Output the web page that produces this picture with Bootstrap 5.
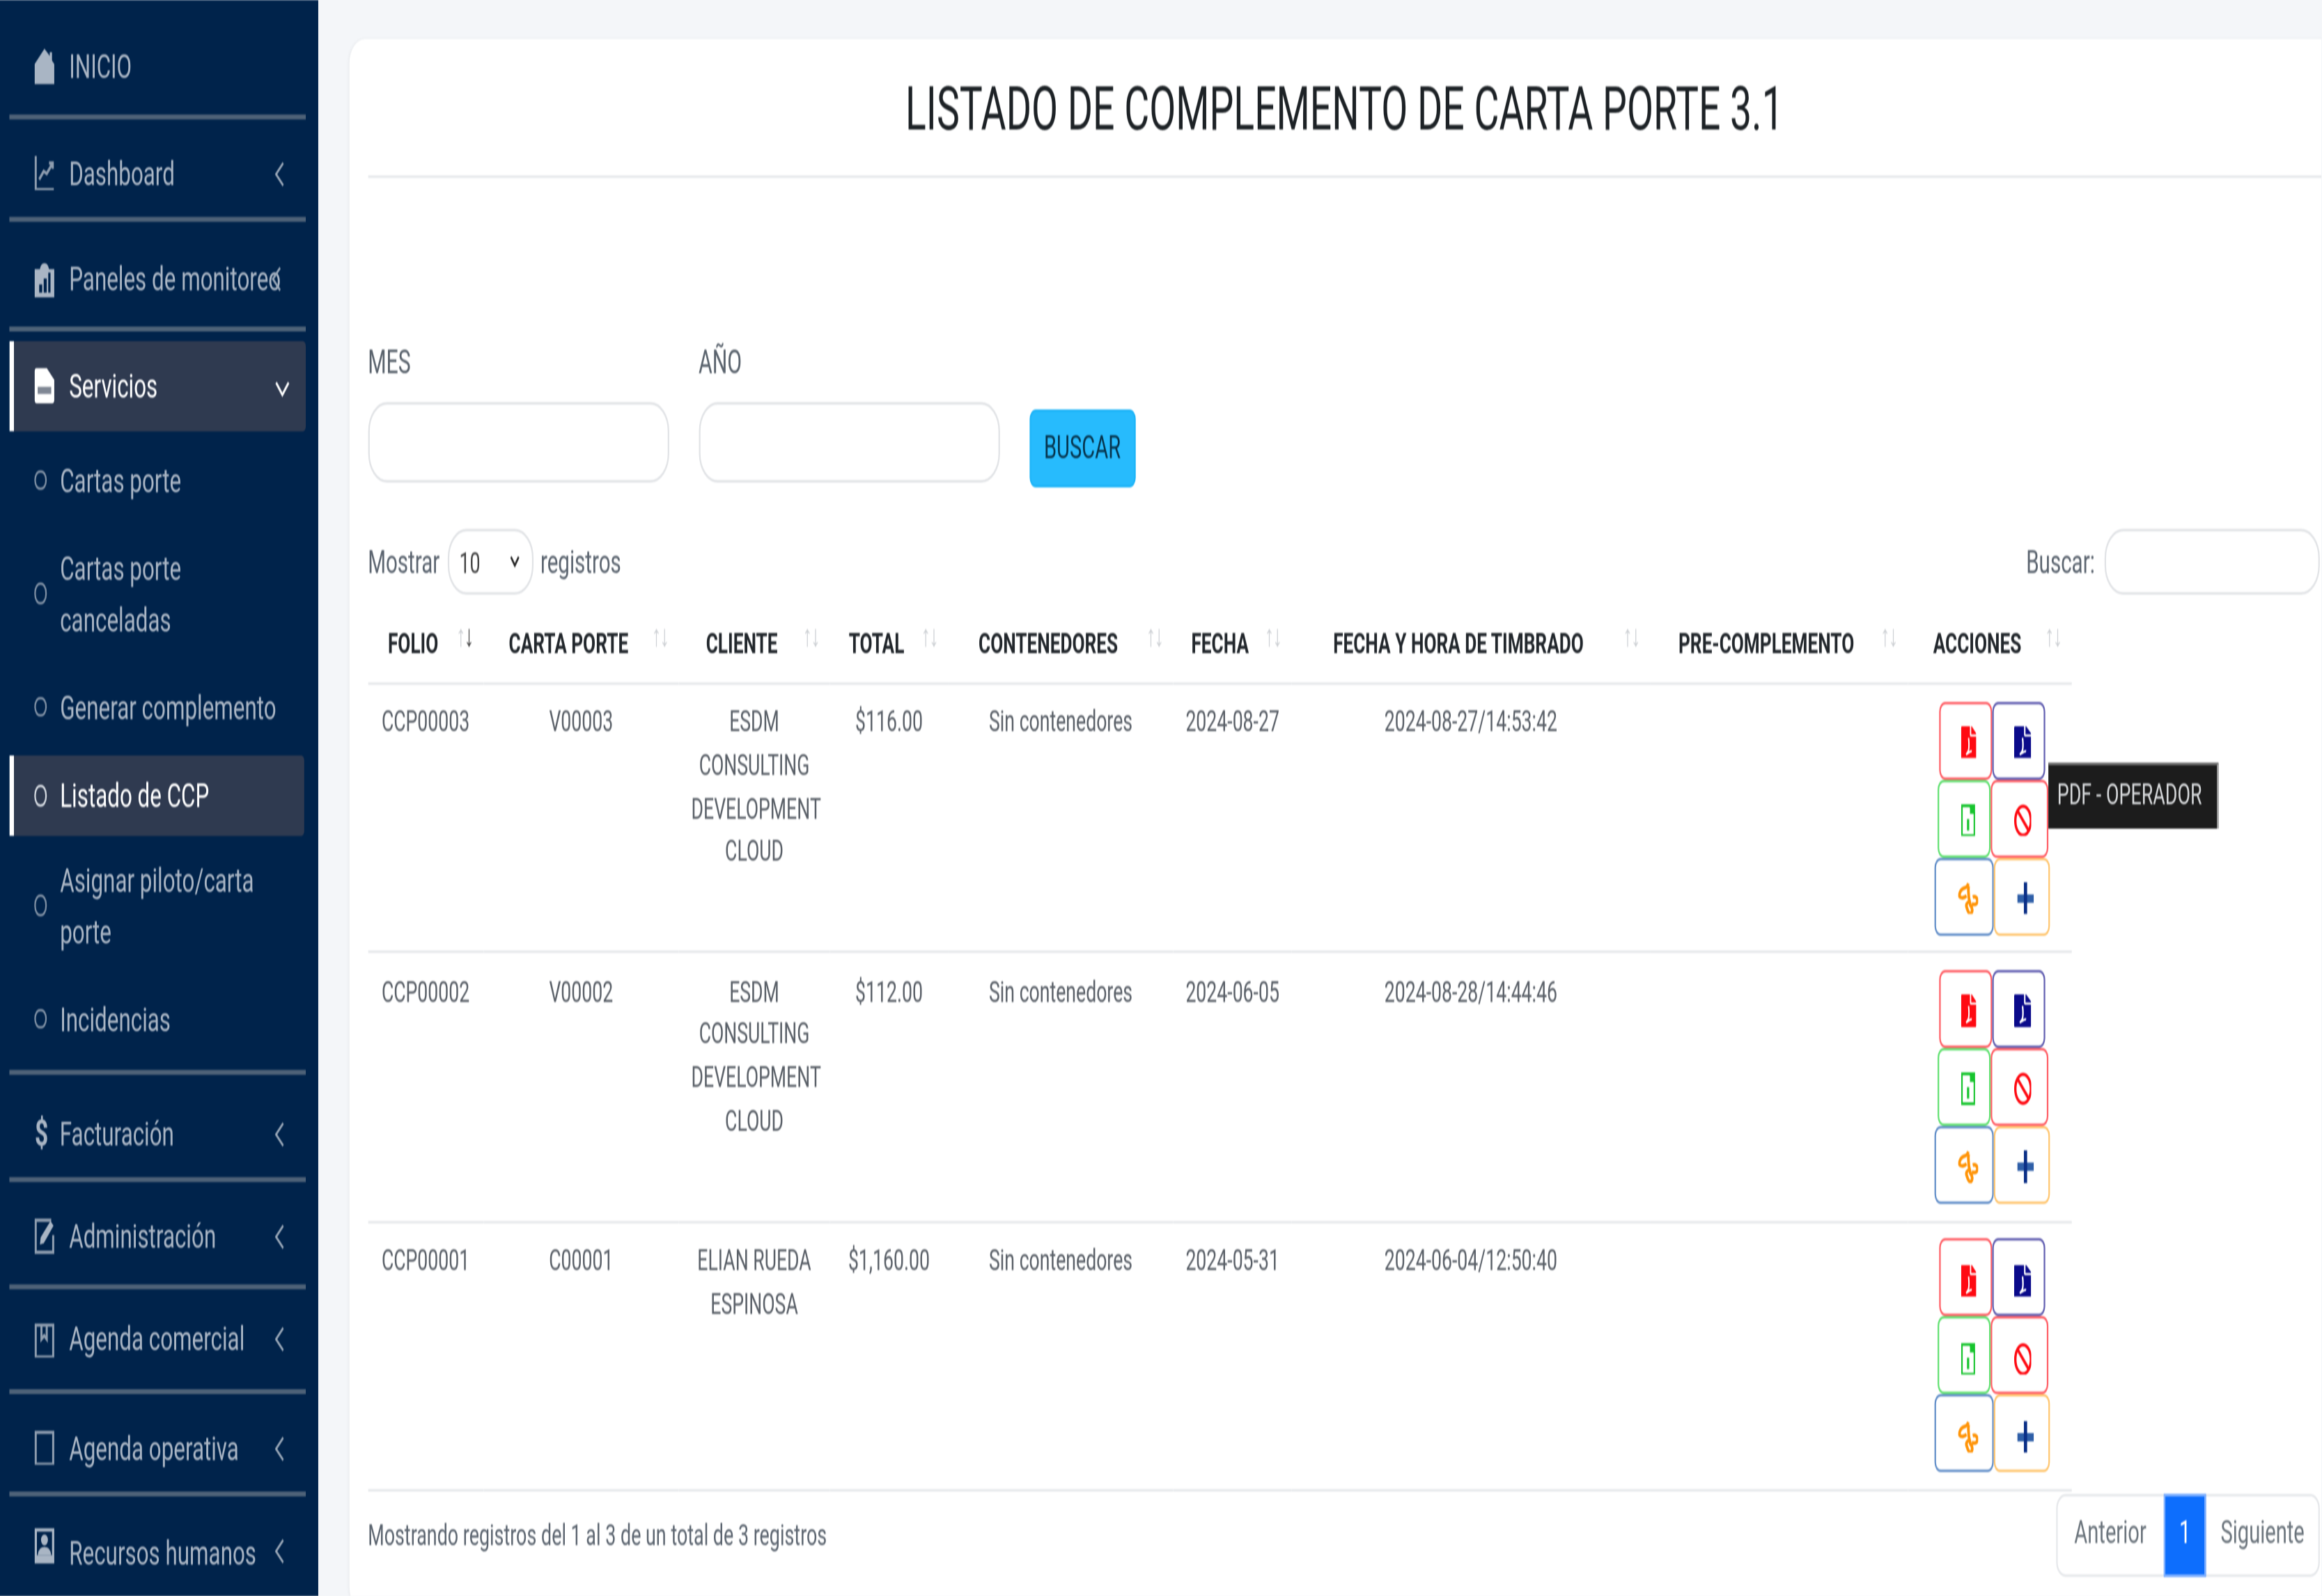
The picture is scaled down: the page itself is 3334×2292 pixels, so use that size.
<!DOCTYPE html>
<html lang="es">
<head>
<meta charset="utf-8">
<title>Listado de complemento de carta porte 3.1</title>
<link rel="stylesheet" href="https://cdn.jsdelivr.net/npm/bootstrap@5.3.0/dist/css/bootstrap.min.css">
<style>
html,body{margin:0;height:100%;overflow:hidden;background:#f4f6f9}
body{font-family:Roboto,"Liberation Sans",sans-serif;font-size:13px;color:#212529}
.stage{width:1488.4px;height:654.9px;transform:scale(2.24,3.5);transform-origin:0 0;overflow:hidden;background:#f4f6f9;filter:blur(.28px)}
.side{width:204px;flex:none;height:100%;background:#00234b;padding:6.5px 7.6px 0 6.3px;font-size:14px;color:#a9b5c4;overflow:hidden}
.side-row{height:41px;padding:2px 14px 0 16px;white-space:nowrap}
.r-a{height:40.3px;padding-top:2px}.r-b{height:40.1px;padding-top:4.4px}.r-c{height:42.7px;padding-top:5.5px}
.r-d{height:42.6px;padding-top:6px}.r-e{height:42.1px;padding-top:2.4px}.r-f{height:41px;padding-top:0}.r-g{height:39.6px;padding-top:4px}.r-h{height:42px;align-items:flex-start!important;padding-top:13px}
.side-sep{height:2px;background:#4e6278;width:190.1px}
.side-row.on{background:#2f3a50;color:#fff;border-left:3px solid #fff;padding:0 14px 0 13px;height:37px;border-radius:0 2px 2px 0;margin-top:4.4px}
.ic{width:13px;height:14.5px;flex:none;margin-right:9px;fill:#a9b5c4;stroke:none}
.ic-line{fill:none;stroke:#8d9cae;stroke-width:1.4}
.on .ic{fill:#fff}
.ic-dollar{width:9px;margin-right:7px;font-weight:700;font-size:15px;line-height:1}
.chev{width:6.5px;height:11px;flex:none;margin-left:auto;fill:none;stroke:#9aa8b8;stroke-width:1.2}
.chev-over{margin-left:-6px}
.chev-down{width:10px;height:7px;margin-right:-4px;stroke:#fff;margin-top:3px}
.sub-list{padding-top:2.2px}
.sub-row{padding:7.5px 6px 7.5px 16px;line-height:21px;min-height:36px}
.sub-row.on{background:#2f3a50;color:#fff;border-left:3px solid #fff;padding:6px 6px 6px 13px;min-height:33px;margin:1.6px 1px .4px 0;border-radius:0 2px 2px 0}
.dot{width:7.6px;height:8.5px;flex:none;margin-right:8.6px;border:1.3px solid #7f90a4;border-radius:50%}
.on .dot{border-color:#d5dae1}
.sep-gap{margin-top:2.6px}
.pane{flex:1;min-width:0;padding:16px 0 0 19.8px}
.sheet{width:1290px;height:645px;background:#fff;border-radius:10px;padding:0 12px;box-shadow:0 0 2px rgba(0,0,0,.06)}
.head-line{width:1252px;height:56.6px;border-bottom:1.5px solid #e6e8eb;margin:0}
.head-line h1{font-size:24.7px;font-weight:400;margin:0;line-height:1;padding-top:3.4px;color:#1d2226}
.filters{width:1250px;padding-top:65px;height:127px;margin:0}
.fld{width:193px;margin-right:19px}
.fld label{font-size:13.5px;color:#5a636d;line-height:20px;margin:0 0 7px;display:block}
.fld input{height:33.4px;border:1.5px solid #e1e3e6;border-radius:12px;padding:0 10px;width:100%}
.go{width:68px;height:32px;margin:30.8px 0 0 0;background:#27bbfd;border:1px solid #1db4f8;border-radius:4px;color:#06344d;font-size:13px;padding:0 0 2px}
.ctrl{width:1251px;height:27px;margin-top:17.5px;color:#5c6570;font-size:13.2px}
.sel{width:54.5px;height:27px;border:1.5px solid #e1e3e6;border-radius:12px;margin:0 4.5px 0 5.6px;padding:0 8px 0 6px;font-size:12px;color:#444}
.sel svg{width:6px;height:5px;fill:none;stroke:#222;stroke-width:1.1}
.find{width:138px;height:27px;border:1.5px solid #e1e3e6;border-radius:12px;margin-left:6px}
.grid-wrap{width:1092px;margin-top:3.5px}
.data-t{table-layout:fixed;width:1092px;margin:0;font-size:11.9px;color:#5a6068;--bs-table-bg:transparent}
.data-t th{position:relative;height:33px;padding:1.6px 24px 0 8px;text-align:center;vertical-align:middle;font-weight:700;color:#22272c;border-bottom:1.5px solid #e6e8eb;white-space:nowrap;font-size:11.7px}
.data-t td{height:110.4px;padding:7.4px 4px;text-align:center;vertical-align:top;line-height:17.6px;border-bottom:1.5px solid #e6e8eb}
.arrows{position:absolute;right:7px;top:7px;font-size:12.5px;font-weight:400;color:#cdd0d4;line-height:1;letter-spacing:-1px}
.arrows b{font-weight:400;color:#444}
.c1{width:74px}.c2{width:125.3px}.c3{width:96.8px}.c4{width:75.9px}.c5{width:144.3px}.c6{width:75.9px}.c7{width:229.7px}.c8{width:165.1px}.c9{width:105.3px}
.data-t td.wrap-cell{padding:7.4px 8px}
.data-t td.acts{padding:6.5px 0 0 4px}
.act-row{height:32px}
.act{height:32px;padding:2px 0 0 4.5px;background:#fff;border:1.6px solid;border-radius:4px;display:flex;align-items:center;justify-content:center}
.act svg{height:13.5px;display:block}
.i-pdf{width:9.8px;color:#ff0a12}.i-pdf2{width:11px;color:#0a0a8a}.i-xls{width:9.2px}.i-ban{width:11.6px}.i-rec{width:13.7px}.i-plus{width:10.7px}
.w-a{width:33.5px}.w-b{width:34.5px}.w-c{width:33.5px}.w-d{width:37px}.w-e{width:38px}.w-f{width:36px}
.b-red{border-color:#ff5f66}.b-ind{border-color:#625fb1}.b-grn{border-color:#62e172}.b-blu{border-color:#638fc9}.b-org{border-color:#ffc670}
.foot-row{width:1251.5px;margin-top:1px}
.foot-row>span{font-size:12px;color:#5c6570}
.pagination{margin:0;--bs-pagination-font-size:13px;--bs-pagination-color:#6c757d;--bs-pagination-border-color:#e6e8eb;--bs-pagination-border-width:1.5px;--bs-pagination-active-bg:#0d6efd;--bs-pagination-active-border-color:#7fb0ff;--bs-pagination-padding-x:0;--bs-pagination-padding-y:0;--bs-pagination-disabled-bg:#fff;--bs-pagination-disabled-color:#6c757d;--bs-pagination-disabled-border-color:#e6e8eb}
.pagination .page-link{height:33.5px;line-height:30.5px;text-align:center}
.pg-a{width:70px}.pg-b{width:27.6px}.pg-c{width:74px}
.tip{position:absolute;left:1313px;top:313px;width:109px;height:27px;background:#1c1c1c;border-top:1.4px solid #6d6d6d;border-right:1.4px solid #9a9a9a;color:#d6d8da;font-size:12px;line-height:25px;text-align:center;padding-right:4px;z-index:5}
</style>
</head>
<body>
<svg width="0" height="0" class="position-absolute">
<defs>
<symbol id="file" viewBox="0 0 384 512" preserveAspectRatio="none"><path fill="currentColor" d="M224 136V0H24C10.7 0 0 10.7 0 24v464c0 13.3 10.7 24 24 24h336c13.3 0 24-10.7 24-24V160H248c-13.2 0-24-10.8-24-24zM376 105L279 7c-4.5-4.500-10.600-7-17-7h-6v128h128v-6.100c0-6.300-2.500-12.400-7-16.900z"/><path fill="none" stroke="#fff" stroke-width="34" d="M190 180c10 70 20 130 0 190-20 40-40 50-60 70 60-30 110-60 140-50"/></symbol>
<symbol id="xls" viewBox="0 0 384 512" preserveAspectRatio="none"><path fill="none" stroke="#17c42e" stroke-width="46" d="M23 23h215l123 123v343H23z"/><path fill="none" stroke="#17c42e" stroke-width="60" d="M190 230v180"/><path fill="#17c42e" d="M240 0h144v150H240z"/></symbol>
<symbol id="ban" viewBox="0 0 384 512" preserveAspectRatio="none"><ellipse cx="192" cy="256" rx="165" ry="225" fill="none" stroke="#ff0a12" stroke-width="50"/><path d="M80 110l224 290" stroke="#ff0a12" stroke-width="52"/></symbol>
<symbol id="rec" viewBox="0 0 460 512" preserveAspectRatio="none"><g fill="none" stroke="#ff9408" stroke-width="58"><path d="M225 20c-20 50-40 60-90 70-80 20-110 90-100 130 40 40 110 20 150-10"/><path d="M230 60c-10 90 0 200 40 300 50 40 50 100 10 130-40 10-70-50-90-100-20-40 0-80 80-100"/><path d="M320 230c70-20 110 30 100 70-10 50-70 50-120 40"/></g></symbol>
<symbol id="plus" viewBox="0 0 460 512" preserveAspectRatio="none"><path fill="#2f5fa8" d="M0 190h460v130H0z"/><path fill="#0b2f86" d="M185 0h90v512h-90z"/></symbol>
<symbol id="chev" viewBox="0 0 7 12"><path d="M6 1 1 6l5 5"/></symbol>
<symbol id="chevd" viewBox="0 0 10 7"><path d="M1 1l4 5 4-5"/></symbol>
</defs>
</svg>
<div class="stage d-flex position-relative">
  <nav class="side">
    <div class="side-row r-a d-flex align-items-center">
      <svg class="ic" viewBox="0 0 13 15"><path d="M6.500 0 10 3V1.500h1.500V5L13 6.500V15H0V6.500z"/></svg><span>INICIO</span>
    </div>
    <div class="side-sep"></div>
    <div class="side-row r-b d-flex align-items-center">
      <svg class="ic ic-line" viewBox="0 0 13 15"><path d="M.7 0v14.300h12M3 10l3-3.500 2 1 4-4.500M9.500 3H12v2.500"/></svg><span>Dashboard</span>
      <svg class="chev"><use href="#chev"/></svg>
    </div>
    <div class="side-sep"></div>
    <div class="side-row r-c d-flex align-items-center">
      <svg class="ic" viewBox="0 0 13 15"><path d="M0 2.500h3.500C4 .8 5 0 6.500 0S9 .8 9.500 2.500H13V15H0zM3 12.500h2V9H3zm3 0h2V6.500H6zm3 0h1.500V4H9z" fill-rule="evenodd"/></svg><span>Paneles de monitoreo</span>
      <svg class="chev chev-over"><use href="#chev"/></svg>
    </div>
    <div class="side-sep"></div>
    <div class="side-row on d-flex align-items-center">
      <svg class="ic" viewBox="0 0 13 15"><path d="M0 1.500Q0 0 1.500 0H8l5 5v8.500Q13 15 11.500 15h-10Q0 15 0 13.500z"/><path d="M2 8h9v3H2z" fill="#7f8794"/></svg><span>Servicios</span>
      <svg class="chev chev-down"><use href="#chevd"/></svg>
    </div>
    <div class="sub-list">
      <div class="sub-row d-flex align-items-center"><span class="dot"></span><span>Cartas porte</span></div>
      <div class="sub-row d-flex align-items-center"><span class="dot"></span><span>Cartas porte<br>canceladas</span></div>
      <div class="sub-row d-flex align-items-center"><span class="dot"></span><span>Generar complemento</span></div>
      <div class="sub-row on d-flex align-items-center"><span class="dot"></span><span>Listado de CCP</span></div>
      <div class="sub-row d-flex align-items-center"><span class="dot"></span><span>Asignar piloto/carta<br>porte</span></div>
      <div class="sub-row d-flex align-items-center"><span class="dot"></span><span>Incidencias</span></div>
    </div>
    <div class="side-sep sep-gap"></div>
    <div class="side-row r-d d-flex align-items-center">
      <span class="ic-dollar">$</span><span>Facturación</span>
      <svg class="chev"><use href="#chev"/></svg>
    </div>
    <div class="side-sep"></div>
    <div class="side-row r-e d-flex align-items-center">
      <svg class="ic ic-line" viewBox="0 0 13 15"><path d="M11 .7H.7v13.600h11.600V7"/><path d="m3.500 11 .5-3L10.500 1l2 2L6 10.500z" fill="#a9b5c4" stroke="none"/></svg><span>Administración</span>
      <svg class="chev"><use href="#chev"/></svg>
    </div>
    <div class="side-sep"></div>
    <div class="side-row r-f d-flex align-items-center">
      <svg class="ic ic-line" viewBox="0 0 13 15"><path d="M.7.7h11.600v13.600H.7zM4.500.7v6l1.800-1.500L8 6.700V.700"/></svg><span>Agenda comercial</span>
      <svg class="chev"><use href="#chev"/></svg>
    </div>
    <div class="side-sep"></div>
    <div class="side-row r-g d-flex align-items-center">
      <svg class="ic ic-line" viewBox="0 0 13 15"><path d="M.7.7h11.600v13.600H.7z"/></svg><span>Agenda operativa</span>
      <svg class="chev"><use href="#chev"/></svg>
    </div>
    <div class="side-sep"></div>
    <div class="side-row r-h d-flex align-items-center">
      <svg class="ic" viewBox="0 0 13 15"><path fill-rule="evenodd" d="M0 0h13v15H0zM1.500 1.500v10h10v-10z"/><circle cx="6.500" cy="5" r="2.300"/><path d="M2 11.500q.5-3.500 4.500-3.500t4.500 3.500z"/></svg><span>Recursos humanos</span>
      <svg class="chev mt-1"><use href="#chev"/></svg>
    </div>
  </nav>
  <main class="pane">
    <div class="sheet">
      <div class="head-line d-flex align-items-center justify-content-center"><h1>LISTADO DE COMPLEMENTO DE CARTA PORTE 3.1</h1></div>
      <div class="filters d-flex align-items-start">
        <div class="fld"><label>MES</label><input class="form-control" type="text"></div>
        <div class="fld"><label>AÑO</label><input class="form-control" type="text"></div>
        <button class="btn go" type="button">BUSCAR</button>
      </div>
      <div class="ctrl d-flex align-items-center">
        <span>Mostrar</span>
        <span class="sel d-flex align-items-center justify-content-between">10 <svg viewBox="0 0 6 5"><path d="M.5.5 3 4 5.500.5"/></svg></span>
        <span>registros</span>
        <span class="ms-auto">Buscar:</span>
        <span class="find"></span>
      </div>
      <div class="grid-wrap">
        <table class="table data-t">
          <colgroup><col class="c1"><col class="c2"><col class="c3"><col class="c4"><col class="c5"><col class="c6"><col class="c7"><col class="c8"><col class="c9"></colgroup>
          <thead><tr>
            <th>FOLIO<span class="arrows">↑<b>↓</b></span></th>
            <th>CARTA PORTE<span class="arrows">↑↓</span></th>
            <th>CLIENTE<span class="arrows">↑↓</span></th>
            <th>TOTAL<span class="arrows">↑↓</span></th>
            <th>CONTENEDORES<span class="arrows">↑↓</span></th>
            <th>FECHA<span class="arrows">↑↓</span></th>
            <th>FECHA Y HORA DE TIMBRADO<span class="arrows">↑↓</span></th>
            <th>PRE-COMPLEMENTO<span class="arrows">↑↓</span></th>
            <th>ACCIONES<span class="arrows">↑↓</span></th>
          </tr></thead>
          <tbody>
            <tr>
              <td>CCP00003</td><td>V00003</td><td class="wrap-cell">ESDM CONSULTING DEVELOPMENT CLOUD</td><td>$116.00</td><td>Sin contenedores</td><td class="text-nowrap">2024-08-27</td><td>2024-08-27/14:53:42</td><td></td>
              <td class="acts">
                <div class="act-row d-flex justify-content-center"><button class="act w-a b-red"><svg class="i-pdf"><use href="#file"/></svg></button><button class="act w-b b-ind"><svg class="i-pdf2"><use href="#file"/></svg></button></div>
                <div class="act-row d-flex justify-content-center"><button class="act w-c b-grn"><svg class="i-xls"><use href="#xls"/></svg></button><button class="act w-d b-red"><svg class="i-ban"><use href="#ban"/></svg></button></div>
                <div class="act-row d-flex justify-content-center"><button class="act w-e b-blu"><svg class="i-rec"><use href="#rec"/></svg></button><button class="act w-f b-org"><svg class="i-plus"><use href="#plus"/></svg></button></div>
              </td>
            </tr>
            <tr>
              <td>CCP00002</td><td>V00002</td><td class="wrap-cell">ESDM CONSULTING DEVELOPMENT CLOUD</td><td>$112.00</td><td>Sin contenedores</td><td class="text-nowrap">2024-06-05</td><td>2024-08-28/14:44:46</td><td></td>
              <td class="acts">
                <div class="act-row d-flex justify-content-center"><button class="act w-a b-red"><svg class="i-pdf"><use href="#file"/></svg></button><button class="act w-b b-ind"><svg class="i-pdf2"><use href="#file"/></svg></button></div>
                <div class="act-row d-flex justify-content-center"><button class="act w-c b-grn"><svg class="i-xls"><use href="#xls"/></svg></button><button class="act w-d b-red"><svg class="i-ban"><use href="#ban"/></svg></button></div>
                <div class="act-row d-flex justify-content-center"><button class="act w-e b-blu"><svg class="i-rec"><use href="#rec"/></svg></button><button class="act w-f b-org"><svg class="i-plus"><use href="#plus"/></svg></button></div>
              </td>
            </tr>
            <tr>
              <td>CCP00001</td><td>C00001</td><td class="wrap-cell">ELIAN RUEDA ESPINOSA</td><td>$1,160.00</td><td>Sin contenedores</td><td class="text-nowrap">2024-05-31</td><td>2024-06-04/12:50:40</td><td></td>
              <td class="acts">
                <div class="act-row d-flex justify-content-center"><button class="act w-a b-red"><svg class="i-pdf"><use href="#file"/></svg></button><button class="act w-b b-ind"><svg class="i-pdf2"><use href="#file"/></svg></button></div>
                <div class="act-row d-flex justify-content-center"><button class="act w-c b-grn"><svg class="i-xls"><use href="#xls"/></svg></button><button class="act w-d b-red"><svg class="i-ban"><use href="#ban"/></svg></button></div>
                <div class="act-row d-flex justify-content-center"><button class="act w-e b-blu"><svg class="i-rec"><use href="#rec"/></svg></button><button class="act w-f b-org"><svg class="i-plus"><use href="#plus"/></svg></button></div>
              </td>
            </tr>
          </tbody>
        </table>
      </div>
      <div class="foot-row d-flex align-items-center justify-content-between">
        <span>Mostrando registros del 1 al 3 de un total de 3 registros</span>
        <ul class="pagination">
          <li class="page-item disabled"><a class="page-link pg-a" href="#">Anterior</a></li>
          <li class="page-item active"><a class="page-link pg-b" href="#">1</a></li>
          <li class="page-item disabled"><a class="page-link pg-c" href="#">Siguiente</a></li>
        </ul>
      </div>
    </div>
  </main>
  <div class="tip">PDF - OPERADOR</div>
</div>
</body>
</html>
